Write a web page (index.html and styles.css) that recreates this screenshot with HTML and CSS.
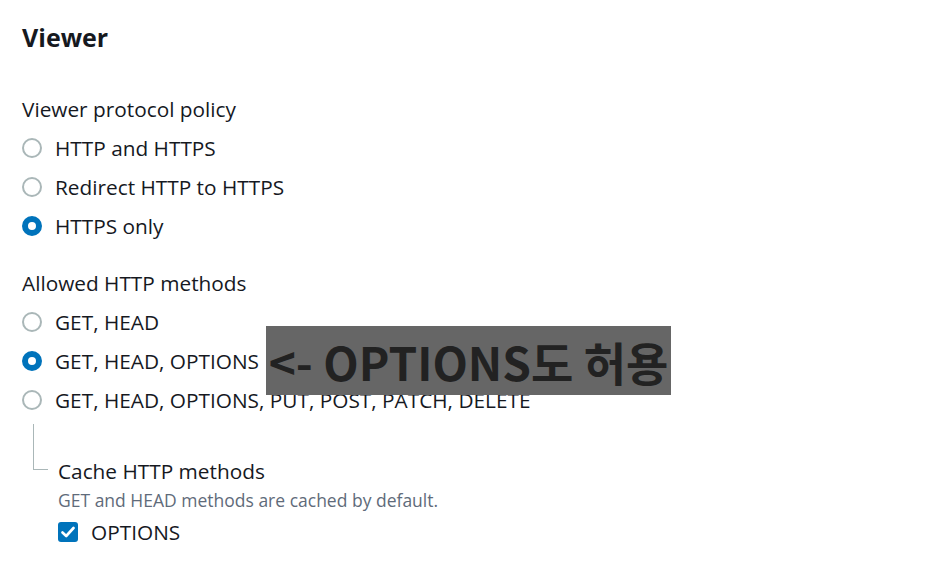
FILE: index.html
```html
<!DOCTYPE html>
<html lang="en">

<head>
    <meta charset="UTF-8">
    <title>Viewer settings</title>
    <link rel="stylesheet" href="styles.css">
</head>

<body>
    <div class="page">
        <h2>Viewer</h2>

        <div class="group">
            <div class="field-label">Viewer protocol policy</div>
            <div class="radio-row"><span class="radio"></span>HTTP and HTTPS</div>
            <div class="radio-row"><span class="radio"></span>Redirect HTTP to HTTPS</div>
            <div class="radio-row"><span class="radio checked"></span>HTTPS only</div>
        </div>

        <div class="group">
            <div class="field-label">Allowed HTTP methods</div>
            <div class="radio-row"><span class="radio"></span>GET, HEAD</div>
            <div class="radio-row"><span class="radio checked"></span>GET, HEAD, OPTIONS</div>
            <div class="radio-row"><span class="radio"></span>GET, HEAD, OPTIONS, PUT, POST, PATCH, DELETE</div>
        </div>

        <div class="sub-field">
            <div class="connector"></div>
            <div class="sub-content">
                <div class="field-label small">Cache HTTP methods</div>
                <div class="description">GET and HEAD methods are cached by default.</div>
                <div class="check-row"><span class="checkbox">
                        <svg width="14" height="12" viewBox="0 0 14 12">
                            <path d="M1.5 6.5 L5.2 10 L12.5 2" fill="none" stroke="#fff" stroke-width="2.6"
                                stroke-linecap="round" stroke-linejoin="round" />
                        </svg>
                    </span>OPTIONS</div>
            </div>
        </div>

        <div class="annotation">&lt;- OPTIONS도 허용</div>
    </div>
</body>

</html>
```

FILE: styles.css
```css
body {
    margin: 0;
    font-family: "Open Sans", "Noto Sans CJK KR", sans-serif;
    color: #16191f;
    background: #fff;
}

.page {
    position: relative;
    padding: 21px 22px 0;
}

h2 {
    margin: 0;
    font-size: 25px;
    line-height: 32px;
    font-weight: 700;
}

.group {
    margin-top: 36px;
}

.group + .group {
    margin-top: 18px;
}

.field-label,
.radio-row {
    display: flex;
    align-items: center;
    height: 39px;
    font-size: 20.8px;
}

.radio {
    box-sizing: border-box;
    width: 20px;
    height: 20px;
    margin-right: 13px;
    border: 2px solid #aab7b8;
    border-radius: 50%;
    background: #fff;
    flex-shrink: 0;
}

.radio.checked {
    border: 6px solid #0073bb;
}

.sub-field {
    display: flex;
    align-items: flex-start;
}

.connector {
    width: 14px;
    height: 45px;
    margin: 5px 0 0 11px;
    border-left: 1px solid #aab7b8;
    border-bottom: 1px solid #aab7b8;
}

.sub-content {
    margin-left: 10px;
    padding-top: 40px;
}

.field-label.small {
    height: 24px;
}

.description {
    margin-top: 6px;
    font-size: 17.5px;
    line-height: 22px;
    color: #5f6b7a;
}

.check-row {
    display: flex;
    align-items: center;
    height: 34px;
    margin-top: 4px;
    font-size: 20.8px;
}

.checkbox {
    display: flex;
    align-items: center;
    justify-content: center;
    width: 20px;
    height: 20px;
    margin-right: 13px;
    border-radius: 3px;
    background: #0073bb;
}

.annotation {
    position: absolute;
    left: 266px;
    top: 326px;
    width: 405px;
    height: 69px;
    display: flex;
    align-items: center;
    justify-content: center;
    background: #666;
    color: #222;
    font-family: "Noto Sans CJK KR", sans-serif;
    font-size: 46px;
    font-weight: 700;
    line-height: 1;
}
```
